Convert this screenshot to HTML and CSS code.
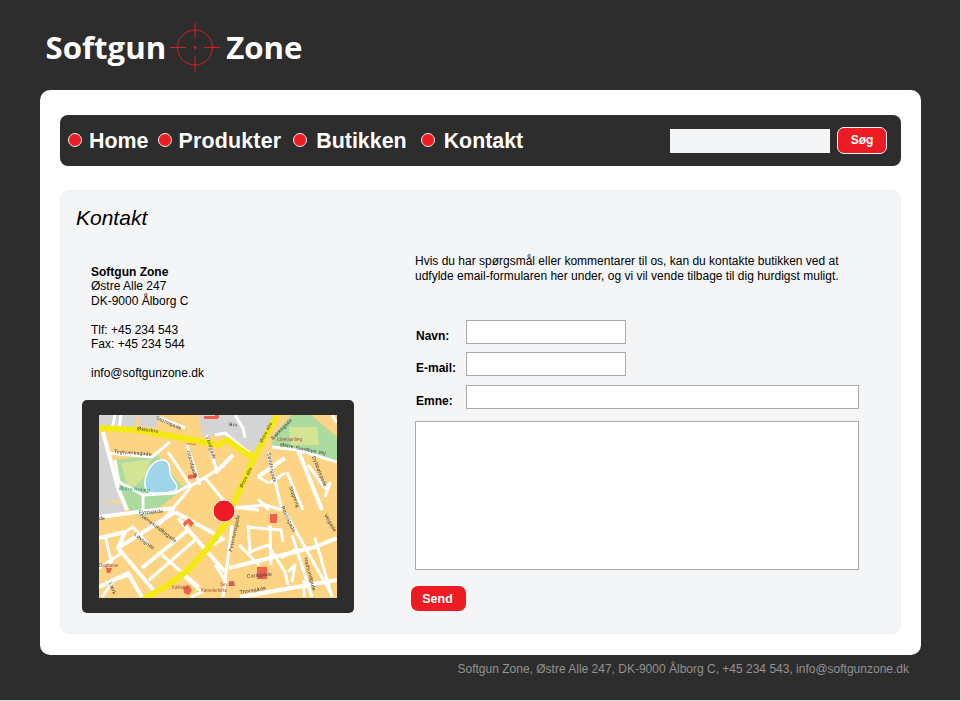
FILE: index.html
```html
<!DOCTYPE html>
<html lang="da">
<head>
<meta charset="utf-8">
<title>Softgun Zone - Kontakt</title>
<link rel="stylesheet" href="styles.css">
</head>
<body>
<div class="page">
  <header class="header">
    <span class="logo-word">Softgun</span>
    <svg class="logo-mark" viewBox="0 0 50 50" width="50" height="50" aria-hidden="true">
      <circle class="cross" cx="25" cy="25" r="17.5"/>
      <path class="cross" d="M0 25H16M34 25H50M25 0V16M25 34V50"/>
      <circle class="cross-dot" cx="25" cy="25" r="1.3"/>
    </svg>
    <span class="logo-word">Zone</span>
  </header>
  <main class="card">
    <nav class="nav">
      <a class="nav-item nav-home"><i class="bullet"></i>Home</a>
      <a class="nav-item nav-prod"><i class="bullet"></i>Produkter</a>
      <a class="nav-item nav-wide"><i class="bullet"></i>Butikken</a>
      <a class="nav-item nav-wide"><i class="bullet"></i>Kontakt</a>
      <form class="search">
        <input class="search-input" type="text" aria-label="Søg">
        <button class="btn btn-search" type="button">Søg</button>
      </form>
    </nav>
    <section class="panel">
      <h1 class="title">Kontakt</h1>
      <div class="columns">
        <div class="left">
          <address class="address"><strong>Softgun Zone</strong><br>Østre Alle 247<br>DK-9000 Ålborg C<br><br>Tlf: +45 234 543<br>Fax: +45 234 544<br><br>info@softgunzone.dk</address>
          <div class="map-frame">
            <svg class="map" viewBox="0 0 238 183" width="238" height="183" role="img" aria-label="Kort">
              <rect class="m-base" width="238" height="183"/>
              <path class="m-grey" d="M0 0H38L36 12L0 13ZM0 20H5L20 75L28 84L0 88ZM40 0H60L58 12L40 12ZM100 0H178L156 38L130 22L103 20ZM0 88H24L26 98L0 102Z"/>
              <path class="m-green" d="M178 16L193 0H212L238 22V47L199 34L172 30Z"/>
              <path class="m-lgreen" d="M190 12H218L220 30L192 30Z"/>
              <path class="m-green" d="M16 45L59 40L76 63L86 73L50 100L33 100L22 78Z"/>
              <path class="m-lgreen" d="M22 48L52 44L46 62L30 76Z"/>
              <path class="m-lake" d="M46 66C48 54 54 46 62 45C71 44 71 54 71 58C72 64 78 68 78 72C78 77 68 78 60 78C50 79 45 76 46 66Z"/>
              <g class="m-road">
                <path d="M4 17L19 73L28 95M0 102L39 97L76 93M76 97L123 123M19 133L76 97M0 123L26 117L19 133L56 177M43 153L89 115M79 103L126 157M0 172L29 158L43 182M199 35L223 95M186 43L159 62M130 153L216 132L238 123M141 182L238 165M134 40L116 58"/>
              </g>
              <g class="m-road-thin">
                <path d="M16 0L13 14M22 0L20 14M59 2L86 13M9 38L53 42L71 27M16 45L20 67L44 80L76 78L91 70L76 47L69 37M88 30L101 70M108 20L118 58M89 73L126 50M44 80V102M106 63L126 87M60 110L91 73M6 120L13 150M0 153L24 137M26 117L34 112L50 130M50 165L96 125M109 133L126 123M86 162L103 177L92 182M63 140L100 172M136 0L144 13L146 23M116 20L126 18L150 38M173 32L199 35L238 47M169 37L183 95M186 58L171 68M188 57L204 95M209 50L226 73L231 68L226 82M133 93L166 90L183 95M159 84L170 95M159 62L170 68M233 0L238 8M133 110L124 182M149 110L151 137L169 130L186 157L189 170M148 112L182 115L184 127M171 110L172 150M116 150L129 170M193 120L213 182M186 97L233 180M216 123L233 182M182 143L199 133M189 157L196 150L193 167M160 95L135 92M3 182L15 165L30 160M140 130L160 150M205 165V182"/>
              </g>
              <path class="m-yellow" d="M0 13L39 15L83 23L119 30L128 25L153 43M178 0L154 45L134 90L130 103L124 112L109 133L89 155L69 170L46 183"/>
              <path class="m-red" d="M105 1H119V4H105ZM116 0H120V3H116ZM88 28L97 29V30L88 29ZM89 60L98 59L97 63L89 64ZM84 108L90 103L95 108L92 112L89 108L85 112ZM84 172L90 170L93 175L90 180L85 178ZM7 153H13L11 158H8ZM171 99H178V108H171ZM158 152H168V164H158ZM130 166H135V171H130Z"/>
              <g class="m-label">
                <text transform="translate(38 15) rotate(8)">Østerbro</text>
                <text transform="translate(57 4) rotate(24)">Stormgade</text>
                <text transform="translate(15 38) rotate(4)">Teglværksgade</text>
                <text transform="translate(20 75) rotate(3)" class="m-teal">Østre Anlæg</text>
                <text transform="translate(88 36) rotate(75)">Istandgade</text>
                <text transform="translate(107 22) rotate(73)">Vordgade</text>
                <text transform="translate(130 11) rotate(3)">Bro</text>
                <text transform="translate(163 28) rotate(-62)" class="m-small">Østre Alle</text>
                <text transform="translate(143 73) rotate(-62)" class="m-small">Østre Alle</text>
                <text transform="translate(174 25) rotate(-45)">Bakkegade</text>
                <text transform="translate(178 26)" class="m-brown">Idrætsanlæg</text>
                <text transform="translate(181 31) rotate(11)">Østre Sundbys Vej</text>
                <text transform="translate(168 38) rotate(78)">Søndergade</text>
                <text transform="translate(190 72) rotate(70)">Slagterig</text>
                <text transform="translate(213 42) rotate(68)">Dybbølsgade</text>
                <text transform="translate(40 99) rotate(-3)">Fynsgade</text>
                <text transform="translate(41 101) rotate(37)">Nørresundbygade</text>
                <text transform="translate(35 120) rotate(38)">Løvsgade</text>
                <text transform="translate(0 152)" class="m-brown">Dagkøber</text>
                <text transform="translate(73 174)" class="m-brown">Kalkstol</text>
                <text transform="translate(102 177)" class="m-brown">Kamelerkirke</text>
                <text transform="translate(0 105)">de</text>
                <text transform="translate(10 168) rotate(70)">Lærk</text>
                <text transform="translate(133 137) rotate(-78)">Petersensgade</text>
                <text transform="translate(182 92) rotate(65)">Rosengade</text>
                <text transform="translate(205 143) rotate(75)">Hadsundgade</text>
                <text transform="translate(225 100) rotate(60)">Vejgade</text>
                <text transform="translate(148 163) rotate(-6)">Carlsgade</text>
                <text transform="translate(141 179) rotate(-10)">Thorsgade</text>
                <text transform="translate(121 171)" class="m-brown">Sevilius</text>
              </g>
              <circle class="m-pin" cx="125" cy="96" r="11"/>
            </svg>
          </div>
        </div>
        <div class="right">
          <p class="intro">Hvis du har spørgsmål eller kommentarer til os, kan du kontakte butikken ved at<br>udfylde email-formularen her under, og vi vil vende tilbage til dig hurdigst muligt.</p>
          <form class="form">
            <div class="row"><label class="label" for="navn">Navn:</label><input class="field field-short" id="navn" type="text"></div>
            <div class="row"><label class="label" for="email">E-mail:</label><input class="field field-short" id="email" type="text"></div>
            <div class="row row-wide"><label class="label" for="emne">Emne:</label><input class="field field-long" id="emne" type="text"></div>
            <textarea class="message" aria-label="Besked"></textarea>
            <button class="btn btn-send" type="button">Send</button>
          </form>
        </div>
      </div>
    </section>
  </main>
  <footer class="footer">Softgun Zone, Østre Alle 247, DK-9000 Ålborg C, +45 234 543, info@softgunzone.dk</footer>
</div>
</body>
</html>
```
FILE: styles.css
```css
* { box-sizing: border-box; }
html, body { margin: 0; padding: 0; }
body { background: #d9d9d9; font-family: "Liberation Sans", Arial, sans-serif; color: #000; overflow: hidden; }
.page { width: 960px; height: 700px; background: #2d2d2d; padding: 0 40px; overflow: hidden; }

.header { height: 90px; display: flex; align-items: center; margin-left: 5.5px; padding-top: 3px; }
.logo-word { font-family: "Open Sans", sans-serif; font-weight: 700; font-size: 31.2px; line-height: 40px; color: #fff; }
.logo-mark { margin: 0 6px 0 4px; flex: none; transform: translateY(0.5px); }
.cross { fill: none; stroke: #ed1c24; stroke-width: 0.9; }
.cross-dot { fill: #ed1c24; }

.card { width: 881px; height: 565px; background: #fff; border-radius: 10px; padding: 25px 20px 0; }

.nav { height: 51px; background: #2d2d2d; border-radius: 8px; display: flex; align-items: center; padding-left: 8px; padding-right: 14px; }
.nav-item { display: flex; align-items: center; color: #fff; font-weight: 700; font-size: 21.4px; line-height: 26px; }
.bullet { width: 14px; height: 14px; border-radius: 50%; background: #ed1c24; border: 1.5px solid #f2f2f2; flex: none; margin-right: 7px; transform: translateY(-1px); }
.nav-home { margin-right: 10px; }
.nav-prod { margin-right: 12px; letter-spacing: 0.2px; }
.nav-prod .bullet { margin-right: 6px; }
.nav-wide { margin-right: 14px; }
.nav-wide .bullet { margin-right: 9px; }
.search { margin-left: auto; display: flex; align-items: center; gap: 7px; }
.search-input { width: 160px; height: 24px; background: #f4f5f7; border: 0; padding: 0; margin: 1px 0 0; }
.btn { background: #ed1c24; color: #fff; font-family: "Liberation Sans", Arial, sans-serif; font-weight: 700; font-size: 12px; padding: 0; border-radius: 7px; }
.btn-search { width: 50px; height: 27px; border: 1px solid #f5f5f5; padding-bottom: 2px; }
.btn-send { width: 55px; height: 25px; border: 0; margin: 16px 0 0 -4px; display: block; font-size: 12.5px; padding-right: 2px; }

.panel { height: 444px; margin-top: 24px; background: #f4f5f7; border: 1px solid #eceeef; border-radius: 10px; padding: 14px 15px 0; }
.title { margin: 0; font-size: 21px; line-height: 25px; font-weight: 400; font-style: italic; }
.columns { display: flex; margin-top: 24px; }
.left { width: 339px; flex: none; padding-top: 10.5px; }
.address { font-style: normal; font-size: 12px; line-height: 14.5px; margin-left: 15px; height: 116px; }
.map-frame { width: 272px; height: 213px; margin: 19.5px 0 0 6px; padding: 15px 17px; background: #2d2d2d; border-radius: 5px; }
.map { display: block; filter: blur(0.35px); }

.m-base { fill: #fdd483; }
.m-grey { fill: #d4d4d4; }
.m-green { fill: #abdb9f; }
.m-lgreen { fill: #d5e494; }
.m-lake { fill: #9ed5ea; stroke: #fff; stroke-width: 1.5; }
.m-road, .m-road-thin, .m-yellow { fill: none; stroke-linejoin: round; }
.m-road { stroke: #fff; stroke-width: 4; }
.m-road-thin { stroke: #fff; stroke-width: 3; }
.m-yellow { stroke: #f2ea12; stroke-width: 6; }
.m-red { fill: #f0604f; }
.m-label { font-family: "Liberation Sans", Arial, sans-serif; font-size: 5px; fill: #333; letter-spacing: 0.3px; }
.m-small { font-size: 4.5px; }
.m-teal { fill: #12806f; }
.m-brown { fill: #a3543f; font-size: 4.5px; letter-spacing: 0; }
.m-pin { fill: #ed1c24; stroke: #fff; stroke-width: 1; }

.intro { margin: 0; font-size: 12px; line-height: 15px; white-space: nowrap; }
.form { margin-top: 36px; }
.row { display: flex; align-items: center; height: 24px; margin-bottom: 8px; }
.row-wide { margin-top: 9px; margin-bottom: 12px; }
.label { width: 51px; padding-left: 1px; font-size: 12px; font-weight: 700; flex: none; position: relative; top: 4px; }
.field, .message { background: #fff; border: 1px solid #aaa; padding: 0; margin: 0; border-radius: 0; display: block; }
.field { height: 24px; }
.field-short { width: 160px; }
.field-long { width: 393px; }
.message { width: 444px; height: 149px; resize: none; }

.footer { text-align: right; font-size: 12px; line-height: 14px; color: #939393; margin-top: 7px; padding-right: 11px; }
```
